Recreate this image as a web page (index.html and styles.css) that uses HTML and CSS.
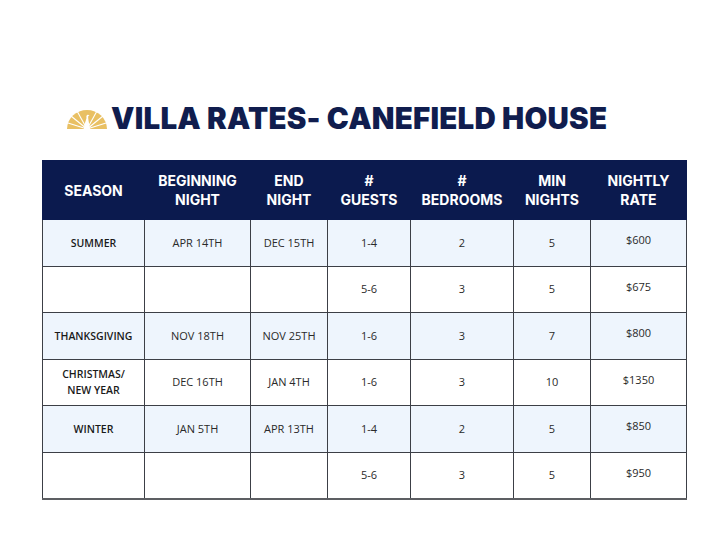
FILE: index.html
```html
<!DOCTYPE html>
<html>
<head>
<meta charset="utf-8">
<link rel="stylesheet" href="styles.css">
</head>
<body>
<div class="page">
  <div class="title-row">
    <svg class="logo" width="40" height="20" viewBox="0 0 40 20">
      <path d="M0 19 A20 19 0 0 1 40 19 Z" fill="#e9c063"/>
      <g stroke="#fff" stroke-width="1.1">
        <line x1="20" y1="19" x2="1" y2="13"/>
        <line x1="20" y1="19" x2="4" y2="6"/>
        <line x1="20" y1="19" x2="10" y2="1"/>
        <line x1="20" y1="19" x2="30" y2="1"/>
        <line x1="20" y1="19" x2="36" y2="6"/>
        <line x1="20" y1="19" x2="39" y2="13"/>
      </g>
      <path d="M17 19 C17 14 19 11 19.5 8 C19 6 20 4 21.5 5 L22.5 5.5 L21.2 6.3 C21 9 22 12 23 19 Z" fill="#fff"/>
    </svg>
    <h1 class="title">VILLA RATES- CANEFIELD HOUSE</h1>
  </div>
  <table class="rates">
    <colgroup>
      <col class="c1"><col class="c2"><col class="c3"><col class="c4"><col class="c5"><col class="c6"><col class="c7">
    </colgroup>
    <thead>
      <tr>
        <th>SEASON</th>
        <th>BEGINNING<br>NIGHT</th>
        <th>END<br>NIGHT</th>
        <th>#<br>GUESTS</th>
        <th>#<br>BEDROOMS</th>
        <th>MIN<br>NIGHTS</th>
        <th>NIGHTLY<br>RATE</th>
      </tr>
    </thead>
    <tbody>
      <tr class="alt">
        <td class="season">SUMMER</td><td>APR 14TH</td><td>DEC 15TH</td><td>1-4</td><td>2</td><td>5</td><td class="rate">$600</td>
      </tr>
      <tr>
        <td></td><td></td><td></td><td>5-6</td><td>3</td><td>5</td><td class="rate">$675</td>
      </tr>
      <tr class="alt">
        <td class="season">THANKSGIVING</td><td>NOV 18TH</td><td>NOV 25TH</td><td>1-6</td><td>3</td><td>7</td><td class="rate">$800</td>
      </tr>
      <tr>
        <td class="season">CHRISTMAS/<br>NEW YEAR</td><td>DEC 16TH</td><td>JAN 4TH</td><td>1-6</td><td>3</td><td>10</td><td class="rate">$1350</td>
      </tr>
      <tr class="alt">
        <td class="season">WINTER</td><td>JAN 5TH</td><td>APR 13TH</td><td>1-4</td><td>2</td><td>5</td><td class="rate">$850</td>
      </tr>
      <tr>
        <td></td><td></td><td></td><td>5-6</td><td>3</td><td>5</td><td class="rate">$950</td>
      </tr>
    </tbody>
  </table>
</div>
</body>
</html>
```

FILE: styles.css
```css
* { box-sizing: border-box; }
html, body {
  margin: 0;
  padding: 0;
  background: #ffffff;
}
.page {
  width: 728px;
  height: 546px;
  padding: 102px 0 0 42px;
}
.title-row {
  display: flex;
  align-items: center;
  gap: 4px;
  padding-left: 25px;
  height: 32px;
}
.logo {
  display: block;
  margin-top: 4px;
}
.title {
  margin: 0;
  font-family: Inter, "Liberation Sans", sans-serif;
  font-weight: 900;
  font-size: 29.5px;
  letter-spacing: 0.22px;
  color: #101d4e;
  line-height: 32px;
}
.rates {
  margin-top: 26px;
  width: 644px;
  border-collapse: collapse;
  table-layout: fixed;
  font-family: "Open Sans", "Liberation Sans", sans-serif;
}
.c1 { width: 102px; }
.c2 { width: 106px; }
.c3 { width: 77px; }
.c4 { width: 83px; }
.c5 { width: 103px; }
.c6 { width: 77px; }
.c7 { width: 96px; }
.rates th {
  background: #0b1a4e;
  color: #ffffff;
  font-family: Inter, "Liberation Sans", sans-serif;
  font-weight: 700;
  font-size: 14px;
  line-height: 19px;
  height: 59px;
  padding: 0;
  text-align: center;
  vertical-align: middle;
  border: 1px solid #0b1a4e;
}
.rates td {
  height: 46.5px;
  padding: 0;
  text-align: center;
  vertical-align: middle;
  border: 1px solid #3c3f46;
  font-size: 11px;
  line-height: 16px;
  color: #2a2a2a;
}
.rates tbody tr:last-child td {
  border-bottom: 2px solid #5d5f63;
}
.rates tr.alt td {
  background: #eef5fd;
}
.rates td.season {
  font-weight: 600;
  font-size: 10.5px;
  color: #1a1a1a;
}
.rates td.rate {
  padding-bottom: 5px;
}
```
